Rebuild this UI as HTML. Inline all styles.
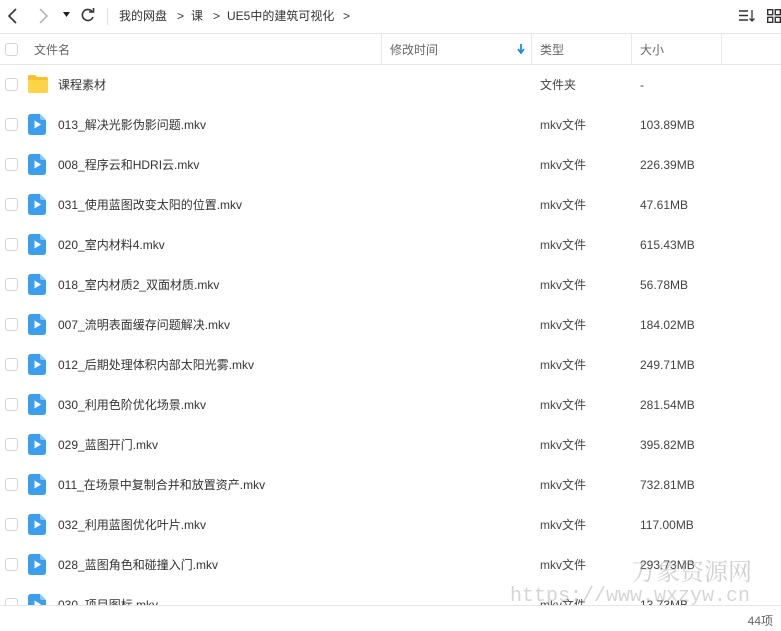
<!DOCTYPE html>
<html><head><meta charset="utf-8">
<style>
*{margin:0;padding:0;box-sizing:border-box}
body{width:781px;height:631px;overflow:hidden;background:#fff;font-family:"Liberation Sans","Noto Sans CJK SC",sans-serif;color:#333;position:relative}
span{line-height:16px;display:block;white-space:nowrap}
.tb{position:absolute;left:0;top:0;width:781px;height:33px}
.tb span{position:absolute;top:8px;font-size:12px;color:#333}
.hdr{position:absolute;left:0;top:33px;width:781px;height:32px;border-top:1px solid #e6e6e6;border-bottom:1px solid #e6e6e6}
.hdr span{position:absolute;top:8px;font-size:12px;color:#666}
.sep{position:absolute;top:0;width:1px;height:30px;background:#e8e8e8}
.cb{position:absolute;left:5px;width:13px;height:13px;border:1px solid #d4d4d4;border-radius:3px;background:#fff}
.list{position:absolute;left:0;top:65px;width:781px;height:540px;overflow:hidden}
.row{position:absolute;left:0;width:781px;height:40px}
.row .cb{top:13px}
.row .ic{position:absolute;left:28px;top:9px}
.row span{position:absolute;top:12px;font-size:12px}
.row .n{left:58px;color:#333}
.row .t{left:540px;color:#444}
.row .s{left:640px;color:#444}
.foot{position:absolute;left:0;top:605px;width:781px;height:26px;border-top:1px solid #e6e6e6}
.wm1{position:absolute;left:632px;top:556px;font-size:24px;line-height:28px;color:rgba(150,150,150,.45);font-family:"Noto Serif CJK SC",serif}
.wm2{position:absolute;left:510px;top:585px;font-size:20px;line-height:24px;color:rgba(150,150,150,.4);font-family:"Liberation Mono",monospace}
</style></head><body>
<div class="tb">
<svg style="position:absolute;left:6px;top:8px" width="12" height="16"><path d="M10 1L3 8L10 15" stroke="#333" stroke-width="1.6" fill="none"/></svg>
<svg style="position:absolute;left:38px;top:8px" width="12" height="16"><path d="M2 1L9 8L2 15" stroke="#aaa" stroke-width="1.4" fill="none"/></svg>
<svg style="position:absolute;left:63px;top:12px" width="8" height="6"><path d="M0 0H7L3.5 5Z" fill="#222"/></svg>
<svg style="position:absolute;left:80px;top:7px" width="16" height="16"><path d="M12.5 5A5.5 5.5 0 1 0 13 10" stroke="#333" stroke-width="1.6" fill="none"/><path d="M9 5H13.5V1" stroke="#333" stroke-width="1.6" fill="none"/></svg>
<div style="position:absolute;left:107px;top:8px;width:1px;height:17px;background:#e0e0e0"></div>
<span style="left:119px">我的网盘</span>
<span style="left:177px">&gt;</span>
<span style="left:191px">课</span>
<span style="left:213px">&gt;</span>
<span style="left:227px">UE5中的建筑可视化</span>
<span style="left:343px">&gt;</span>
<svg style="position:absolute;left:739px;top:9px" width="16" height="14"><path d="M0 2H9M0 6.5H9M0 11H9" stroke="#333" stroke-width="1.4"/><path d="M13 1V12M10.5 9.5L13 12L15.5 9.5" stroke="#333" stroke-width="1.3" fill="none"/></svg>
<svg style="position:absolute;left:767px;top:9px" width="14" height="14"><rect x="0.7" y="0.7" width="5" height="5" stroke="#333" stroke-width="1.4" fill="none"/><rect x="8.3" y="0.7" width="5" height="5" stroke="#333" stroke-width="1.4" fill="none"/><rect x="0.7" y="8.3" width="5" height="5" stroke="#333" stroke-width="1.4" fill="none"/><rect x="8.3" y="8.3" width="5" height="5" stroke="#333" stroke-width="1.4" fill="none"/></svg>
</div>
<div class="hdr">
<div class="cb" style="top:9px"></div>
<span style="left:34px">文件名</span>
<div class="sep" style="left:381px"></div>
<span style="left:390px">修改时间</span>
<svg style="position:absolute;left:517px;top:10px" width="8" height="10"><path d="M4 0V8M1 5L4 9L7 5" stroke="#1e88e5" stroke-width="1.8" fill="none"/></svg>
<div class="sep" style="left:531px"></div>
<span style="left:540px">类型</span>
<div class="sep" style="left:631px"></div>
<span style="left:640px">大小</span>
<div class="sep" style="left:721px"></div>
</div>
<div class="list">
<div class="row" style="top:0"><div class="cb"></div>
<svg class="ic" width="20" height="20"><path d="M0 3Q0 1 2 1H7L9 3H18Q20 3 20 5V17Q20 19 18 19H2Q0 19 0 17Z" fill="#fbc02d"/><path d="M0 6H20V17Q20 19 18 19H2Q0 19 0 17Z" fill="#fdd447"/></svg>
<span class="n">课程素材</span><span class="t">文件夹</span><span class="s">-</span></div>
</div>
<div class="foot"><span style="position:absolute;right:8px;top:7px;font-size:12px;color:#666">44项</span></div>
<div class="wm1">万象资源网</div>
<div class="wm2">https://www.wxzyw.cn</div>
<script>
var d=[["013_解决光影伪影问题.mkv","103.89MB"],["008_程序云和HDRI云.mkv","226.39MB"],["031_使用蓝图改变太阳的位置.mkv","47.61MB"],["020_室内材料4.mkv","615.43MB"],["018_室内材质2_双面材质.mkv","56.78MB"],["007_流明表面缓存问题解决.mkv","184.02MB"],["012_后期处理体积内部太阳光雾.mkv","249.71MB"],["030_利用色阶优化场景.mkv","281.54MB"],["029_蓝图开门.mkv","395.82MB"],["011_在场景中复制合并和放置资产.mkv","732.81MB"],["032_利用蓝图优化叶片.mkv","117.00MB"],["028_蓝图角色和碰撞入门.mkv","293.73MB"],["030_项目图标.mkv","13.73MB"]];
var L=document.querySelector('.list'),h='';
d.forEach(function(r,i){h+='<div class="row" style="top:'+(40*(i+1))+'px"><div class="cb"></div><svg class="ic" width="18" height="21"><path d="M3 0H12L18 6V18Q18 21 15 21H3Q0 21 0 18V3Q0 0 3 0Z" fill="#3d9ef0"/><path d="M12 0L18 6H14Q12 6 12 4Z" fill="#8cc8f7"/><path d="M6.5 6.5L13 10.5L6.5 14.5Z" fill="#fff"/></svg><span class="n">'+r[0]+'</span><span class="t">mkv文件</span><span class="s">'+r[1]+'</span></div>';});
L.innerHTML+=h;
</script>
</body></html>
